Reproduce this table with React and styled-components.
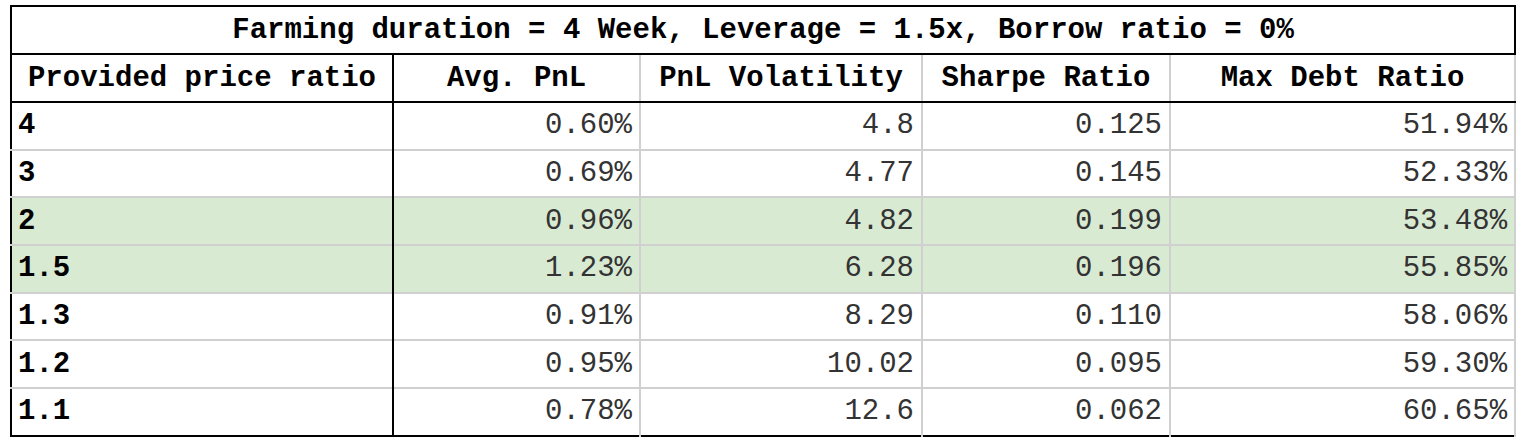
import React from 'react';
import styled, { createGlobalStyle } from 'styled-components';

const GlobalStyle = createGlobalStyle`
  body {
    margin: 0;
    background: #ffffff;
  }
`;

const Wrapper = styled.div`
  padding: 5px 0 0 10px;
`;

const Table = styled.table`
  border-collapse: collapse;
  table-layout: fixed;
  width: 1504px;
  font-family: "Liberation Mono", "Courier New", monospace;
  font-size: 29px;
  color: #000;
  border: 2px solid #000;
`;

const TitleCell = styled.th`
  height: 46px;
  padding: 0;
  text-align: center;
  font-weight: bold;
  border-bottom: 2px solid #000;
`;

const HeadCell = styled.th`
  height: 46px;
  padding: 0 6px;
  text-align: center;
  font-weight: bold;
  border-bottom: 2px solid #000;
  border-right: ${p => (p.$first ? '2px solid #000' : '2px solid #d0d0d0')};
  white-space: nowrap;
`;

const Row = styled.tr`
  background: ${p => (p.$highlight ? '#d9ead3' : '#ffffff')};
`;

const LabelCell = styled.td`
  height: 45.7px;
  padding: 0 6px;
  text-align: left;
  font-weight: bold;
  border-right: 2px solid #000;
  border-top: 2px solid #d0d0d0;
`;

const ValueCell = styled.td`
  height: 45.7px;
  padding: 0 7px;
  text-align: right;
  color: #333;
  border-right: 2px solid #d0d0d0;
  border-top: 2px solid #d0d0d0;
`;

const columns = ['Provided price ratio', 'Avg. PnL', 'PnL Volatility', 'Sharpe Ratio', 'Max Debt Ratio'];
const widths = [382, 247, 282, 248, 345];

const rows = [
  { ratio: '4', pnl: '0.60%', vol: '4.8', sharpe: '0.125', debt: '51.94%' },
  { ratio: '3', pnl: '0.69%', vol: '4.77', sharpe: '0.145', debt: '52.33%' },
  { ratio: '2', pnl: '0.96%', vol: '4.82', sharpe: '0.199', debt: '53.48%', highlight: true },
  { ratio: '1.5', pnl: '1.23%', vol: '6.28', sharpe: '0.196', debt: '55.85%', highlight: true },
  { ratio: '1.3', pnl: '0.91%', vol: '8.29', sharpe: '0.110', debt: '58.06%' },
  { ratio: '1.2', pnl: '0.95%', vol: '10.02', sharpe: '0.095', debt: '59.30%' },
  { ratio: '1.1', pnl: '0.78%', vol: '12.6', sharpe: '0.062', debt: '60.65%' },
];

const App = () => (
  <Wrapper>
    <GlobalStyle />
    <Table>
      <colgroup>
        {widths.map((w, i) => <col key={i} style={{ width: w }} />)}
      </colgroup>
      <thead>
        <tr>
          <TitleCell colSpan={5}>
            Farming duration = 4 Week, Leverage = 1.5x, Borrow ratio = 0%
          </TitleCell>
        </tr>
        <tr>
          {columns.map((c, i) => (
            <HeadCell key={c} $first={i === 0}>{c}</HeadCell>
          ))}
        </tr>
      </thead>
      <tbody>
        {rows.map(r => (
          <Row key={r.ratio} $highlight={r.highlight}>
            <LabelCell>{r.ratio}</LabelCell>
            <ValueCell>{r.pnl}</ValueCell>
            <ValueCell>{r.vol}</ValueCell>
            <ValueCell>{r.sharpe}</ValueCell>
            <ValueCell>{r.debt}</ValueCell>
          </Row>
        ))}
      </tbody>
    </Table>
  </Wrapper>
);

export default App;
